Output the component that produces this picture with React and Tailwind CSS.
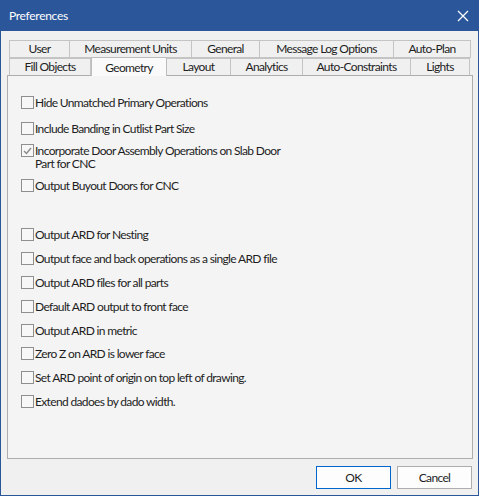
import React from 'react';

const topTabs = [
  { label: 'User', w: 'w-[61px]' },
  { label: 'Measurement Units', w: 'w-[122px]' },
  { label: 'General', w: 'w-[68px]' },
  { label: 'Message Log Options', w: 'w-[134px]' },
  { label: 'Auto-Plan', w: 'w-[77px]' },
];

const bottomTabs = [
  { label: 'Fill Objects', w: 'w-[82px]' },
  { label: 'Geometry', w: 'w-[76px]', active: true },
  { label: 'Layout', w: 'w-[64px]' },
  { label: 'Analytics', w: 'w-[72px]' },
  { label: 'Auto-Constraints', w: 'w-[108px]' },
  { label: 'Lights', w: 'w-[59px]' },
];

const secondGroup = [
  'Output ARD for Nesting',
  'Output face and back operations as a single ARD file',
  'Output ARD files for all parts',
  'Default ARD output to front face',
  'Output ARD in metric',
  'Zero Z on ARD is lower face',
  'Set ARD point of origin on top left of drawing.',
  'Extend dadoes by dado width.',
];

const CheckRow = ({ label, checked, className = '' }) => (
  <div className={`flex items-start ${className}`}>
    <div className="mt-[1px] w-[13px] h-[13px] shrink-0 border border-[#8f8f8f] bg-[#f7f7f7] flex items-center justify-center">
      {checked && (
        <svg width="9" height="8" viewBox="0 0 9 8">
          <path d="M1 4 L3.5 6.5 L8 1" fill="none" stroke="#8a8a8a" strokeWidth="1.4" />
        </svg>
      )}
    </div>
    <span className="ml-[1px] max-w-[262px] leading-[13px] pt-[1px]">{label}</span>
  </div>
);

const App = () => {
  return (
    <div
      className="w-[479px] h-[496px] bg-[#f0f0f0] border border-[#2b579a] flex flex-col text-[12px] tracking-[-0.65px] text-[#1e1e1e]"
      style={{ fontFamily: '"Segoe UI", Lato, "Liberation Sans", sans-serif' }}
    >
      {/* Title bar */}
      <div className="h-[30px] bg-[#2b579a] flex items-center justify-between pl-[8px] pr-[9px] text-white">
        <span className="text-[12px] tracking-[-0.3px]">Preferences</span>
        <svg width="12" height="12" viewBox="0 0 12 12">
          <path d="M1 1 L11 11 M11 1 L1 11" stroke="white" strokeWidth="1.2" />
        </svg>
      </div>

      <div className="flex-1 flex flex-col pl-[6px] pr-[6px] pt-[9px]">
        {/* Tabs */}
        <div className="pl-[2px]">
          <div className="flex h-[18px]">
            {topTabs.map((t, i) => (
              <div
                key={t.label}
                className={`${t.w} h-[18px] border border-[#c4c4c4] ${i > 0 ? 'border-l-0' : ''} bg-[#f0f0f0] flex items-center justify-center`}
              >
                {t.label}
              </div>
            ))}
          </div>
          <div className="flex h-[17px] items-end">
            {bottomTabs.map((t, i) =>
              t.active ? (
                <div
                  key={t.label}
                  className={`${t.w} h-[19px] border border-b-0 border-[#bdbdbd] bg-[#fafafa] flex items-center justify-center pt-[2px] relative z-10 mb-[-1px]`}
                >
                  {t.label}
                </div>
              ) : (
                <div
                  key={t.label}
                  className={`${t.w} h-[17px] border border-b-0 border-[#c4c4c4] ${i > 0 ? 'border-l-0' : ''} bg-[#f0f0f0] flex items-center justify-center`}
                >
                  {t.label}
                </div>
              )
            )}
          </div>
        </div>

        {/* Panel */}
        <div className="h-[384px] w-[466px] border border-[#adadad] bg-[#f4f4f4] pl-[13px] pt-[19px]">
          <div className="flex flex-col">
            <CheckRow label="Hide Unmatched Primary Operations" />
            <CheckRow label="Include Banding in Cutlist Part Size" className="mt-[12px]" />
            <CheckRow
              label="Incorporate Door Assembly Operations on Slab Door Part for CNC"
              checked
              className="mt-[8px]"
            />
            <CheckRow label="Output Buyout Doors for CNC" className="mt-[8px]" />
          </div>
          <div className="flex flex-col gap-[9.9px] mt-[35px]">
            {secondGroup.map((l) => (
              <CheckRow key={l} label={l} />
            ))}
          </div>
        </div>

        {/* Buttons */}
        <div className="flex justify-end gap-[6px] mt-[7px]">
          <button className="w-[75px] h-[23px] border border-[#0066cc] bg-[#fdfdfd] text-[12px]">OK</button>
          <button className="w-[75px] h-[23px] border border-[#adadad] bg-[#fdfdfd] text-[12px]">Cancel</button>
        </div>
      </div>
    </div>
  );
};

export default App;
